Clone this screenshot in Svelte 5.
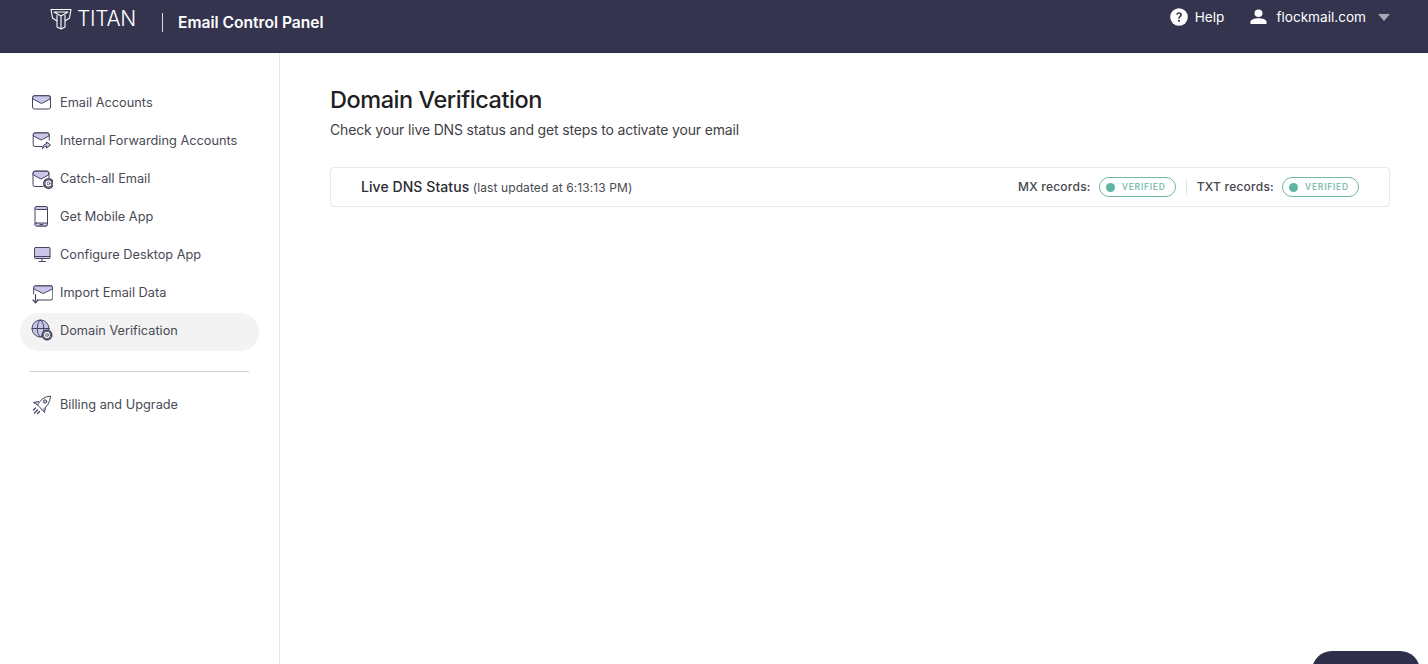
<script>
	let items = [
		{ label: "Email Accounts", icon: "mail" },
		{ label: "Internal Forwarding Accounts", icon: "forward" },
		{ label: "Catch-all Email", icon: "catch" },
		{ label: "Get Mobile App", icon: "mobile" },
		{ label: "Configure Desktop App", icon: "desktop" },
		{ label: "Import Email Data", icon: "import" },
		{ label: "Domain Verification", icon: "domain", active: true }
	];
	let records = ["MX records:", "TXT records:"];
</script>

{#snippet gear(x, y)}
	<circle cx={x} cy={y} r="4.7" fill="#fff" stroke="#45455f" stroke-width="1.6" stroke-dasharray="1.7 1.2" />
	<circle cx={x} cy={y} r="3.6" fill="#fff" stroke="#45455f" stroke-width="0.9" />
	<circle cx={x} cy={y} r="1.4" fill="none" stroke="#45455f" stroke-width="0.8" />
{/snippet}

{#snippet navIcon(name)}
	<svg class="nav-icon" viewBox="0 0 24 24" width="24" height="24" fill="none" stroke="#45455f" stroke-width="1" stroke-linejoin="round" stroke-linecap="round">
		{#if name === "mail"}
			<rect x="3.5" y="5.5" width="18" height="13.5" rx="2" />
			<path d="M4 7 Q4.5 5.8 5.5 5.8 H19.5 Q20.5 5.8 21 7 V9 L12.5 13.5 L4 9 Z" fill="#c9c6ea" />
		{:else if name === "forward"}
			<path d="M13 18.5 H6 Q4.2 18.5 4.2 16.7 V6.5 Q4.2 4.8 6 4.8 H18.5 Q20.3 4.8 20.3 6.5 V12" />
			<path d="M4.6 6 Q5 5 6 5 H18.5 Q19.5 5 19.9 6 V8 L12.2 12 L4.6 8 Z" fill="#c9c6ea" />
			<path d="M13.5 20.5 Q14 16 17.5 15.8 V14 L21.5 17 L17.5 20 V18.2 Q15.5 18 13.5 20.5 Z" fill="#c9c6ea" />
		{:else if name === "catch"}
			<path d="M14 20.5 H6 Q4 20.5 4 18.5 V7 Q4 5 6 5 H18 Q20 5 20 7 V12" />
			<path d="M4.4 6.5 Q5 5.3 6 5.3 H18 Q19 5.3 19.6 6.5 V9 L12 13 L4.4 9 Z" fill="#c9c6ea" />
			{@render gear(19.5, 17.5)}
		{:else if name === "mobile"}
			<rect x="6" y="2.5" width="12.5" height="19.5" rx="2" />
			<rect x="6" y="2.5" width="12.5" height="3" rx="1.4" fill="#c9c6ea" />
			<rect x="6" y="19" width="12.5" height="3" rx="1.4" fill="#c9c6ea" />
			<path d="M11 20.5 H13.5" />
		{:else if name === "desktop"}
			<rect x="5.5" y="5.5" width="15.5" height="11" rx="1" fill="#c9c6ea" />
			<path d="M5.5 14.5 H21 M10 19.5 H16.5 M13 16.5 V19.5" />
		{:else if name === "import"}
			<path d="M8.5 20 H22 Q23.8 20 23.8 18.2 V7.5 Q23.8 5.8 22 5.8 H6.5 Q4.7 5.8 4.7 7.5 V14" />
			<path d="M5 7 Q5.5 6 6.5 6 H22 Q23 6 23.4 7 V9 L14.2 13.5 L5 9 Z" fill="#c9c6ea" />
			<path d="M6.5 14.5 V22.5 M4 20 L6.5 22.8 L9 20" stroke-width="1.2" />
		{:else if name === "domain"}
			<circle cx="11.5" cy="10.5" r="8.5" fill="#c9c6ea" />
			<path d="M3 10.5 H20 M11.5 2 C7 5.5 7 15.5 11.5 19 M11.5 2 C16 5.5 16 15.5 11.5 19" />
			{@render gear(18, 17)}
		{:else if name === "rocket"}
			<path d="M11 15.5 L8.5 13 Q12.5 5 21.5 4 Q21 13 13.5 18 Z" />
			<circle cx="16" cy="9.5" r="1.7" fill="#c9c6ea" />
			<path d="M9.5 9.5 L4.5 10.5 L8.5 13 M16.5 15.5 L15.5 20.5 L13.5 18" fill="#c9c6ea" />
			<path d="M6.5 16 L4.5 18 M8.5 18 L5.5 21 M10.5 19.5 L8.5 21.5" stroke-width="1.3" />
		{/if}
	</svg>
{/snippet}

<div class="page">
	<header class="topbar">
		<div class="brand">
			<svg class="logo" viewBox="0 0 22 22" width="22" height="22" fill="none" stroke="#fff" stroke-width="1.1" stroke-linejoin="round">
				<path d="M1 1.5 H21 L19.5 10 L15 13 V19 L11 21 L7 19 V13 L2.5 10 Z" />
				<path d="M4 4 H18 L11 8 Z M11 8 V21 M7 13 V7 M15 13 V7" />
			</svg>
			<span class="titan">TITAN</span>
			<span class="sep"></span>
			<span class="product">Email Control Panel</span>
		</div>
		<div class="top-right">
			<svg class="help-icon" viewBox="0 0 20 20" width="18" height="18">
				<circle cx="10" cy="10" r="9.8" fill="#fff" />
				<path d="M6.9 7.6 C7 5.7 8.4 4.8 10.1 4.8 C12 4.8 13.3 5.9 13.3 7.5 C13.3 9.6 10.9 9.7 10.8 11.9 H9.1 C9.1 9.1 11.3 9 11.3 7.6 C11.3 6.9 10.8 6.5 10 6.5 C9.2 6.5 8.8 7 8.7 7.6 Z" fill="#34344f" />
				<circle cx="10" cy="14.3" r="1.2" fill="#34344f" />
			</svg>
			<span class="help">Help</span>
			<svg class="user-icon" viewBox="0 0 18 18" width="17" height="16" fill="#fff" preserveAspectRatio="none">
				<circle cx="9" cy="4.8" r="4.2" />
				<path d="M0.5 17 V14.6 C0.5 11.6 5.5 10.4 9 10.4 C12.5 10.4 17.5 11.6 17.5 14.6 V17 Z" />
			</svg>
			<span class="account">flockmail.com</span>
			<span class="caret"></span>
		</div>
	</header>

	<div class="body">
		<nav class="sidebar">
			{#each items as item}
				<div class="nav-item" class:active={item.active}>
					{@render navIcon(item.icon)}
					<span>{item.label}</span>
				</div>
			{/each}
			<div class="divider"></div>
			<div class="nav-item">
				{@render navIcon("rocket")}
				<span>Billing and Upgrade</span>
			</div>
		</nav>

		<main class="content">
			<h1>Domain Verification</h1>
			<p class="sub">Check your live DNS status and get steps to activate your email</p>
			<div class="status-card">
				<div class="status-title">
					<span class="live">Live DNS Status</span>
					<span class="updated">(last updated at 6:13:13 PM)</span>
				</div>
				<div class="records">
					{#each records as rec, i}
						{#if i > 0}<span class="rec-sep"></span>{/if}
						<span class="rec-label">{rec}</span>
						<span class="badge"><i></i>VERIFIED</span>
					{/each}
				</div>
			</div>
		</main>
	</div>

	<div class="chat-btn"></div>
</div>

<style>
	:global(body) {
		margin: 0;
		background: #fff;
		font-family: Inter, "Liberation Sans", sans-serif;
	}

	.page {
		position: relative;
		height: 664px;
		overflow: hidden;
		display: flex;
		flex-direction: column;
	}

	.topbar {
		height: 52px;
		flex: none;
		display: flex;
		justify-content: space-between;
		background: #34344f;
		border-bottom: 1px solid #2b2b42;
		color: #fff;
	}

	.brand {
		display: flex;
		align-items: flex-start;
		padding-left: 50px;
	}

	.logo {
		margin-top: 8px;
	}

	.titan {
		margin: 6px 0 0 5px;
		font-size: 21px;
		line-height: 26px;
		font-weight: 300;
		letter-spacing: -0.3px;
	}

	.sep {
		width: 1px;
		height: 19px;
		margin: 13px 15px 0 26px;
		background: #d5d5dd;
	}

	.product {
		margin-top: 13px;
		font-size: 15.6px;
		line-height: 20px;
		font-weight: 600;
	}

	.top-right {
		display: flex;
		align-items: flex-start;
		padding-right: 38px;
		font-size: 13.6px;
		line-height: 20px;
	}

	.help-icon {
		margin: 8px 7px 0 0;
	}

	.help {
		margin-top: 7px;
	}

	.user-icon {
		margin: 9px 0 0 26px;
	}

	.account {
		margin: 7px 0 0 9px;
	}

	.caret {
		width: 0;
		height: 0;
		margin: 14px 0 0 12px;
		border-left: 6.5px solid transparent;
		border-right: 6.5px solid transparent;
		border-top: 7px solid #a9a9b5;
	}

	.body {
		flex: 1;
		display: flex;
		min-height: 0;
	}

	.sidebar {
		width: 279px;
		flex: none;
		border-right: 1px solid #e6e6e6;
		padding-top: 32px;
	}

	.nav-item {
		width: 239px;
		height: 38px;
		margin-left: 20px;
		padding: 0 0 4px 9px;
		box-sizing: border-box;
		border-radius: 19px;
		display: flex;
		align-items: center;
		gap: 7px;
		font-size: 12.75px;
		color: #4a4a55;
	}

	.nav-item.active {
		background: #f3f3f4;
	}

	.nav-icon {
		flex: none;
	}

	.divider {
		width: 219px;
		height: 1px;
		margin: 20px 0 15px 30px;
		background: #cfcfcf;
	}

	.content {
		flex: 1;
		padding: 30px 38px 0 50px;
		min-width: 0;
	}

	h1 {
		margin: 0;
		font-size: 23.5px;
		line-height: 34px;
		font-weight: 500;
		letter-spacing: -0.45px;
		color: #1f1f24;
	}

	.sub {
		margin: 1px 0 0;
		font-size: 14px;
		line-height: 24px;
		letter-spacing: -0.16px;
		color: #3f3f46;
	}

	.status-card {
		height: 40px;
		margin-top: 25px;
		box-sizing: border-box;
		border: 1px solid #e8e8e8;
		border-radius: 4px;
		display: flex;
		align-items: center;
		justify-content: space-between;
		padding: 0 30px;
	}

	.status-title {
		margin-bottom: 2px;
	}

	.live {
		font-size: 14px;
		font-weight: 500;
		letter-spacing: 0.07px;
		color: #2c2c33;
	}

	.updated {
		font-size: 12px;
		letter-spacing: 0.1px;
		color: #4a4a52;
		margin-left: -1px;
	}

	.records {
		display: flex;
		align-items: center;
	}

	.rec-label {
		font-size: 12px;
		letter-spacing: 0.24px;
		font-weight: 500;
		color: #45454d;
		margin-bottom: 2px;
	}

	.rec-sep {
		width: 1px;
		height: 16px;
		margin: 0 10px;
		background: #e4e4e4;
	}

	.badge {
		margin-left: 8px;
		width: 77px;
		height: 20px;
		box-sizing: border-box;
		border: 1px solid #6fb8a7;
		border-radius: 10px;
		display: flex;
		align-items: center;
		padding-left: 6px;
		font-size: 8.5px;
		font-weight: 600;
		letter-spacing: 0.75px;
		color: #7fbfb0;
	}

	.badge i {
		width: 9px;
		height: 9px;
		border-radius: 50%;
		background: #5fb5a2;
		margin-right: 7px;
	}

	.chat-btn {
		position: absolute;
		left: 1312px;
		top: 651px;
		width: 108px;
		height: 40px;
		border-radius: 20px;
		background: #2f2f4c;
	}
</style>
